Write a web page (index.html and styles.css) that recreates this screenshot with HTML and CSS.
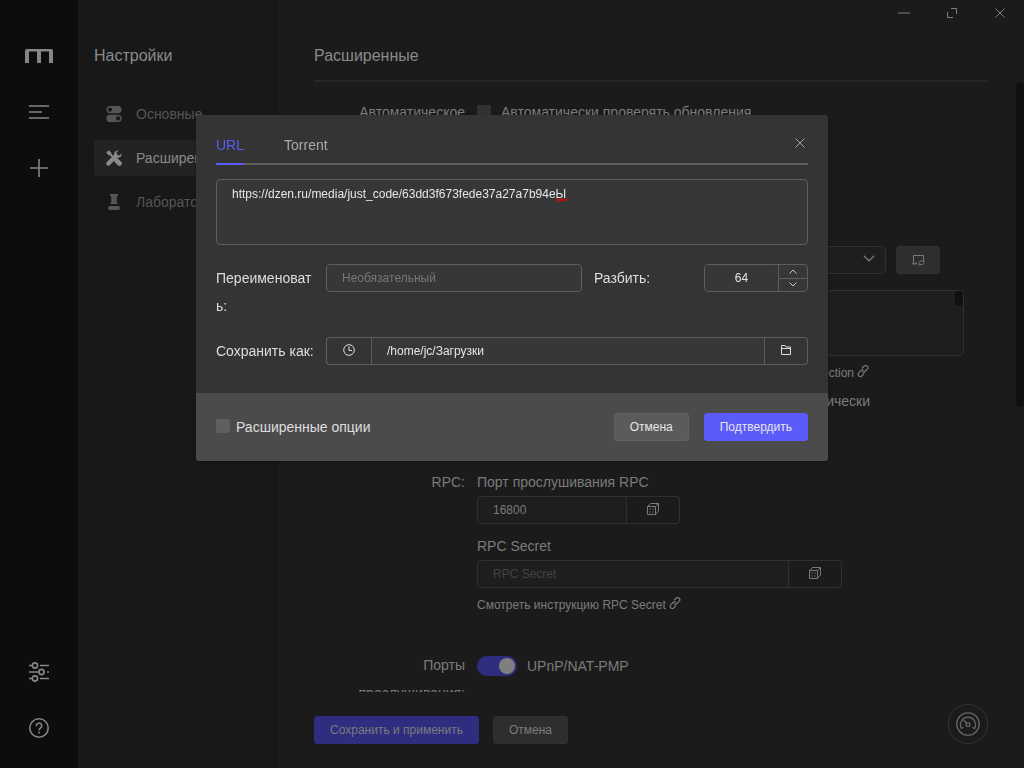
FILE: index.html
```html
<!DOCTYPE html>
<html lang="ru">
<head>
<meta charset="utf-8">
<meta name="viewport" content="width=device-width, initial-scale=1">
<title>Расширенные</title>
<link rel="stylesheet" href="styles.css">
</head>
<body>
<svg class="defs" aria-hidden="true">
  <symbol id="link" viewBox="0 0 12 12"><path d="M5 3.200 7.200 1.200a1.900 1.900 0 0 1 3 0c.9.9.9 2.100 0 3L8 6.500c-.8.8-1.900.8-2.700.2M7 8.800 4.800 10.800a1.900 1.900 0 0 1-3 0c-.9-.9-.9-2.100 0-3L4 5.500c.8-.8 1.900-.8 2.700-.2" fill="none" stroke="currentColor" stroke-width="1.200"/></symbol>
  <symbol id="dice" viewBox="0 0 12 12"><path d="M.5 3.500h8v8h-8zM.5 3.500l3-3h8l-3 3M11.500.5v7.500l-3 3.500" fill="none" stroke="currentColor"/><path d="M2 5h2v2H2zM5 5h2v2H5zM2 8h2v2H2zM5 8h2v2H5z" fill="currentColor" opacity=".35"/></symbol>
  <symbol id="cross" viewBox="0 0 10 10"><path d="m.5.5 9 9m0-9-9 9" fill="none" stroke="currentColor"/></symbol>
</svg>
<div class="app">
  <aside class="rail">
    <div class="rail-group">
      <a class="rail-item" href="#" aria-label="Motrix"><svg width="28" height="14" viewBox="0 0 28 14"><path d="M0 14V2a2 2 0 0 1 2-2h24a2 2 0 0 1 2 2v12h-4V2.500h-8V14h-4V2.500H4V14z" fill="currentColor"/></svg></a>
      <button class="rail-item" aria-label="Задачи"><svg width="20" height="14" viewBox="0 0 20 14"><path d="M0 1h20M0 7h13M0 13h20" stroke="currentColor" stroke-width="1.600"/></svg></button>
      <button class="rail-item" aria-label="Добавить"><svg width="18" height="18" viewBox="0 0 18 18"><path d="M9 0v18M0 9h18" stroke="currentColor" stroke-width="1.600"/></svg></button>
    </div>
    <div class="rail-group">
      <button class="rail-item" aria-label="Настройки"><svg width="20" height="20" viewBox="0 0 20 20" fill="none" stroke="currentColor" stroke-width="1.600"><path d="M0 3.500h3M11 3.500h9M0 10h10M18 10h2M0 16.500h3M11 16.500h9"/><circle cx="6" cy="3.500" r="2.600"/><circle cx="12.500" cy="10" r="2.600"/><circle cx="6" cy="16.500" r="2.600"/></svg></button>
      <button class="rail-item" aria-label="Помощь"><svg width="20" height="20" viewBox="0 0 20 20" fill="none" stroke="currentColor" stroke-width="1.600"><circle cx="10" cy="10" r="9.200"/><path d="M7.300 8.200V7.800a2.700 2.700 0 1 1 4.600 1.900C11 10.400 10 10.700 10 12.200M10 13.600v1.800"/></svg></button>
    </div>
  </aside>
  <nav class="subnav">
    <h2 class="title">Настройки</h2>
    <a class="nav-item" href="#"><svg width="16" height="16" viewBox="0 0 16 16"><path fill-rule="evenodd" d="M4 0h8a3.600 3.600 0 0 1 0 7.200H4A3.600 3.600 0 0 1 4 0zm0 1.500a2.100 2.100 0 1 0 0 4.200 2.100 2.100 0 0 0 0-4.200zM4 8.800h8a3.600 3.600 0 0 1 0 7.200H4a3.600 3.600 0 0 1 0-7.200zm8 1.500a2.100 2.100 0 1 0 0 4.200 2.100 2.100 0 0 0 0-4.200z" fill="currentColor"/></svg>Основные</a>
    <a class="nav-item active" href="#"><svg width="16" height="16" viewBox="0 0 16 16" fill="none" stroke="currentColor" stroke-linecap="round"><path d="m2.500 2.500 5 5" stroke-width="1.800"/><path d="M1.200 2.800 2.800 1.200 4.600 3 3 4.600z" fill="currentColor" stroke-width="1.400"/><path d="m10.500 10.500 3 3" stroke-width="4.600"/><path d="m2.400 13.600 7.500-7.500" stroke-width="4.200"/><path d="M10.700.8C8.300 1.300 7.600 3.800 8.400 5.600l2 2c2.200.8 4.800-.3 5.300-2.800l-.2-1.300-2.200 2.100-2.300-.6-.6-2.300L12.600.5z" fill="currentColor" stroke="none"/></svg>Расширенные</a>
    <a class="nav-item" href="#"><svg width="16" height="16" viewBox="0 0 16 16"><path d="M4 0h8v1.500L10.700 3v5L12 10H4l1.300-2V3L4 1.500zM4 12h8a2 2 0 0 1 0 4H4a2 2 0 0 1 0-4z" fill="currentColor"/></svg>Лаборатория</a>
  </nav>
  <main class="main">
    <h1 class="title main-title">Расширенные</h1>
    <div class="scroll">
      <form class="form">
        <div class="row row-update">
          <div class="row-label">Автоматическое обновление:</div>
          <div><label class="check-line"><input type="checkbox" class="check">Автоматически проверять обновления</label></div>
        </div>
        <div class="row row-tracker">
          <div class="row-label">Трекеры:</div>
          <div>
            <div class="tracker-source">
              <div class="select-wrap">
                <select class="field" aria-label="Источник трекеров"><option></option></select>
                <svg class="select-arrow" width="12" height="7" viewBox="0 0 12 7"><path d="m.8.800 5.200 5 5.200-5" fill="none" stroke="currentColor" stroke-width="1.200"/></svg>
              </div>
              <button type="button" class="button sync" aria-label="Обновить список"><svg width="13" height="12" viewBox="0 0 13 12"><path d="M1.500 8V1.500h10V6" fill="none" stroke="currentColor"/><path d="M0 8.500h5v2H0z" fill="currentColor" opacity=".8"/><path d="M7 8.500c.5-2 4-2.200 5-.5V6M12 9c-.5 2-4 2.200-5 .5V11.500" fill="none" stroke="currentColor"/></svg></button>
            </div>
            <div class="tracker-wrap"><textarea class="field area" aria-label="Список трекеров"></textarea><span class="area-thumb"></span></div>
            <p class="hint hint-wide"><a href="#">XIU2/TrackersListCollection <svg width="12" height="12"><use href="#link"/></svg></a></p>
            <label class="check-line check-wide"><input type="checkbox" class="check">Обновлять список трекеров автоматически</label>
          </div>
        </div>
        <div class="row">
          <div class="row-label">RPC:</div>
          <div>
            <label class="caption" for="port">Порт прослушивания RPC</label>
            <div class="group group-port"><input id="port" class="field" type="text" value="16800"><button type="button" class="addon" aria-label="Случайный порт"><svg width="12" height="12"><use href="#dice"/></svg></button></div>
            <label class="caption caption-next" for="secret">RPC Secret</label>
            <div class="group group-secret"><input id="secret" class="field" type="text" placeholder="RPC Secret"><button type="button" class="addon" aria-label="Случайный ключ"><svg width="12" height="12"><use href="#dice"/></svg></button></div>
            <p class="hint"><a href="#">Смотреть инструкцию RPC Secret <svg width="12" height="12"><use href="#link"/></svg></a></p>
          </div>
        </div>
        <div class="row">
          <div class="row-label">Порты прослушивания:</div>
          <div><label class="switch-line"><input type="checkbox" class="switch" role="switch" checked>UPnP/NAT-PMP</label></div>
        </div>
      </form>
    </div>
    <div class="actions"><button class="button primary">Сохранить и применить</button><button class="button">Отмена</button></div>
  </main>
</div>
<span class="page-thumb"></span>
<div class="window-controls">
  <button aria-label="Свернуть"><svg width="12" height="2"><path d="M0 1h12" stroke="currentColor" stroke-width="2" opacity=".5"/></svg></button>
  <button aria-label="Развернуть"><svg width="10" height="10" viewBox="0 0 10 10"><path d="M4 .5h5.500V6M.5 4v5.500H6" fill="none" stroke="currentColor"/></svg></button>
  <button aria-label="Закрыть"><svg width="10" height="10"><use href="#cross"/></svg></button>
</div>
<button class="speed" aria-label="Скорость"><svg width="24" height="24" viewBox="0 0 24 24" fill="none" stroke="currentColor" stroke-width="1.300"><circle cx="12" cy="12" r="11.200"/><path d="M5.500 16.500a7.500 7.500 0 1 1 13 0l-2-1.200M5.500 16.500l2-1.200"/><circle cx="12" cy="12.500" r="1.900"/><path d="M10.700 11.200 7.500 8"/></svg></button>

<div class="dialog" role="dialog" aria-label="Новая задача">
  <form>
    <div class="dialog-body">
      <div class="tabs" role="tablist"><button type="button" class="tab selected" role="tab" aria-selected="true">URL</button><button type="button" class="tab" role="tab">Torrent</button></div>
      <button type="button" class="dialog-close" aria-label="Закрыть"><svg width="10" height="10"><use href="#cross"/></svg></button>
      <div class="url-wrap">
        <textarea class="field area" aria-label="URL" spellcheck="false">https://dzen.ru/media/just_code/63dd3f673fede37a27a7b94eЫ</textarea>
        <svg class="squiggle" width="12" height="4" viewBox="0 0 12 4"><polyline points="0,3 2,1 4,3 6,1 8,3 10,1 11,2" fill="none" stroke="#f00000" stroke-width="1.200"/></svg>
      </div>
      <div class="task-row">
        <div class="pair"><label for="rename">Переименовать:</label><input id="rename" class="field" type="text" placeholder="Необязательный"></div>
        <div class="pair"><label for="split">Разбить:</label>
          <div class="stepper"><input id="split" class="field" type="text" inputmode="numeric" value="64"><div class="steps"><button type="button" aria-label="Больше"><svg width="8" height="5" viewBox="0 0 8 5"><path d="m.5 4.500 3.500-3.500 3.500 3.500" fill="none" stroke="currentColor"/></svg></button><button type="button" aria-label="Меньше"><svg width="8" height="5" viewBox="0 0 8 5"><path d="m.5.500 3.500 3.500 3.500-3.500" fill="none" stroke="currentColor"/></svg></button></div></div>
        </div>
      </div>
      <div class="pair save-row"><label for="dir">Сохранить как:</label>
        <div class="group"><button type="button" class="addon" aria-label="История"><svg width="12" height="12" viewBox="0 0 12 12" fill="none" stroke="currentColor"><circle cx="6" cy="6" r="5.300"/><path d="M6 2.500v4h3"/></svg></button><input id="dir" class="field" type="text" value="/home/jc/Загрузки"><button type="button" class="addon" aria-label="Выбрать папку"><svg width="10" height="10" viewBox="0 0 10 10" fill="none" stroke="currentColor"><path d="M.5 9.500v-9h3.500l1 1.500h4.500v7.500zM.5 3.500h9"/></svg></button></div>
      </div>
    </div>
    <div class="dialog-footer">
      <label class="options"><input type="checkbox" class="check">Расширенные опции</label>
      <div class="dialog-actions"><button type="button" class="button">Отмена</button><button type="button" class="button primary">Подтвердить</button></div>
    </div>
  </form>
</div>
</body>
</html>
```

FILE: styles.css
```css
:root {
  --line: #303030;
  --field: #1e1e1e;
  --text: #7b7b7b;
  --button: #2e2e2e;
  --button-line: #303030;
  --button-text: #7b7b7b;
  --primary: #2e2d7f;
  --check: #303132;
  --placeholder: #434343;
}
* { box-sizing: border-box; }
html, body { height: 100%; }
body {
  margin: 0;
  overflow: hidden;
  background: #1b1b1b;
  color: var(--text);
  font: 14px/28px "Liberation Sans", Arial, sans-serif;
}
button, input, select, textarea { font: inherit; color: inherit; margin: 0; }
button { padding: 0; border: 0; background: none; cursor: pointer; }
a { color: inherit; text-decoration: none; }
svg { display: block; flex: none; }
.defs { position: absolute; width: 0; height: 0; }

.app { display: flex; height: 100vh; }
.rail {
  display: flex;
  flex-direction: column;
  justify-content: space-between;
  flex: 0 0 78px;
  padding: 28px 0 12px;
  background: #0d0d0d;
  color: #858585;
}
.rail-group { display: flex; flex-direction: column; }
.rail-item { display: flex; align-items: center; justify-content: center; height: 56px; }

.title { margin: 0; font-size: 16px; font-weight: 400; line-height: 28px; color: #8a8a8a; }
.subnav { flex: 0 0 200px; padding: 42px 16px 0; background: #181818; }
.nav-item {
  display: flex;
  align-items: center;
  gap: 14px;
  height: 36px;
  margin-bottom: 8px;
  padding: 0 12px;
  border-radius: 3px;
  color: #555;
}
.title + .nav-item { margin-top: 26px; }
.nav-item.active { background: #232323; color: #8a8a8a; }

.main { display: flex; flex-direction: column; flex: 1; min-width: 0; padding: 42px 36px 0; }
.main-title { padding-bottom: 10px; border-bottom: 2px solid #262626; }
.scroll { flex: 1; min-height: 0; overflow: hidden; padding: 16px 24px 0 0; }
.form { display: flex; flex-direction: column; gap: 36px; }
.row { display: grid; grid-template-columns: 151px 1fr; column-gap: 12px; }
.row-label { text-align: right; }
.row-update { min-height: 112px; }
.row-tracker { min-height: 186px; }
.check-line, .switch-line, .options { display: flex; align-items: center; }
.check {
  appearance: none;
  flex: none;
  width: 14px;
  height: 14px;
  border: 1px solid var(--check);
  border-radius: 2px;
  background: var(--check);
}
.check-line { gap: 10px; }
.check-wide { margin-top: 4px; }

.field {
  flex: 1;
  display: block;
  width: 100%;
  min-width: 0;
  height: 28px;
  padding: 0 15px;
  border: 1px solid var(--line);
  border-radius: 4px;
  outline: 0;
  background: var(--field);
  color: var(--button-text);
  font-size: 12px;
  appearance: none;
}
.field::placeholder { color: var(--placeholder); opacity: 1; }
.area { height: 66px; padding: 5px 15px; line-height: 18px; resize: none; overflow: hidden; }
.tracker-source { display: flex; gap: 10px; padding-right: 24px; margin-bottom: 16px; }
.select-wrap { position: relative; flex: 1; }
.select-arrow { position: absolute; right: 11px; top: 9px; }
.tracker-wrap { position: relative; }
.area-thumb { position: absolute; top: 1px; right: 1px; width: 8px; height: 15px; border-radius: 4px; background: #101010; }
.hint { margin: 7px 0 0; font-size: 12px; line-height: 20px; }
.hint a { display: inline-flex; gap: 3px; }
.hint svg { margin-top: 2px; }
.hint-wide, .check-wide { width: 393px; justify-content: flex-end; text-align: right; }
.hint-wide { width: 392px; }
.caption { display: block; }
.caption-next { margin-top: 8px; }

.group { display: flex; flex: 1; min-width: 0; }
.group-port { width: calc(100% * 5 / 12); }
.group-secret { width: 75%; }
.group .field { border-radius: 0; }
.group > .field:first-child { border-radius: 4px 0 0 4px; }
.addon {
  display: flex;
  align-items: center;
  justify-content: center;
  flex: 0 0 53px;
  height: 28px;
  border: 1px solid var(--line);
}
.addon svg { margin-bottom: 2px; }
.addon:first-child { border-right: 0; border-radius: 4px 0 0 4px; }
.addon:last-child { border-left: 0; border-radius: 0 4px 4px 0; }

.switch-line { gap: 10px; height: 30px; }
.switch {
  appearance: none;
  display: flex;
  justify-content: flex-end;
  width: 40px;
  height: 20px;
  padding: 2px;
  border-radius: 10px;
  background: var(--primary);
}
.switch::after { content: ""; width: 16px; height: 16px; border-radius: 50%; background: #7f7f7f; }

.button {
  height: 28px;
  padding: 0 15px;
  border: 1px solid var(--button-line);
  border-radius: 3px;
  background: var(--button);
  color: var(--button-text);
  font-size: 12px;
  line-height: 26px;
}
.button.primary { border-color: var(--primary); background: var(--primary); }
.sync { display: flex; align-items: center; justify-content: center; width: 44px; }
.actions { display: flex; gap: 14px; padding: 24px 0; }

.page-thumb { position: fixed; right: 0; top: 82px; width: 8px; height: 325px; border-radius: 4px; background: #101010; }
.window-controls { position: fixed; top: 0; right: 0; display: flex; color: #808080; }
.window-controls button { display: flex; align-items: center; justify-content: center; width: 48px; height: 26px; }
.speed {
  position: fixed;
  right: 36px;
  bottom: 24px;
  display: flex;
  align-items: center;
  justify-content: center;
  width: 40px;
  height: 40px;
  border: 1px solid #333;
  border-radius: 50%;
  color: #666;
}

.dialog {
  --line: #5e5e5e;
  --field: #373737;
  --text: #dedede;
  --button: #5b5b5b;
  --button-line: #616161;
  --button-text: #e6e6e6;
  --primary: #5b5bfa;
  --check: #5e5f61;
  --placeholder: #777;
  position: fixed;
  top: 15vh;
  left: 50%;
  width: 632px;
  margin-left: -316px;
  overflow: hidden;
  border-radius: 3px;
  background: #343434;
  color: var(--text);
  box-shadow: 0 1px 3px rgba(0, 0, 0, 0.3);
}
.dialog-body { position: relative; padding: 16px 20px 28px; }
.tabs { display: flex; gap: 40px; border-bottom: 2px solid #5e5e5e; }
.tab { margin-bottom: -2px; padding-bottom: 4px; border-bottom: 2px solid transparent; color: #a9a9a9; }
.tab.selected { border-color: var(--primary); color: var(--primary); }
.dialog-close {
  position: absolute;
  top: 18px;
  right: 18px;
  display: flex;
  align-items: center;
  justify-content: center;
  width: 20px;
  height: 20px;
  color: #a3a3a3;
}
.url-wrap { position: relative; margin: 14px 0 19px; }
.squiggle { position: absolute; z-index: 1; left: 340px; top: 19px; }
.pair { display: flex; align-items: flex-start; min-width: 0; }
.pair label { flex: 0 0 110px; padding-right: 12px; overflow-wrap: anywhere; }
.save-row label { padding-right: 8px; white-space: nowrap; }
.task-row { display: grid; grid-template-columns: 366fr 214fr; column-gap: 12px; margin-bottom: 17px; }
.stepper { display: flex; flex: 1; min-width: 0; border: 1px solid var(--line); border-radius: 4px; background: var(--field); }
.stepper .field { height: 26px; padding: 0; border: 0; text-align: center; }
.steps { display: flex; flex-direction: column; width: 29px; border-left: 1px solid var(--line); color: #c8c8c8; }
.steps button { display: flex; flex: 1; align-items: center; justify-content: center; }
.steps button + button { border-top: 1px solid var(--line); }
.save-row .addon { flex-basis: 45px; }
.save-row .addon:last-child { flex-basis: 43px; }
.dialog-footer { display: flex; align-items: center; justify-content: space-between; padding: 20px; background: #4b4b4b; }
.options { gap: 6px; }
.options .check { margin-bottom: 2px; }
.dialog-actions { display: flex; gap: 15px; }
```
